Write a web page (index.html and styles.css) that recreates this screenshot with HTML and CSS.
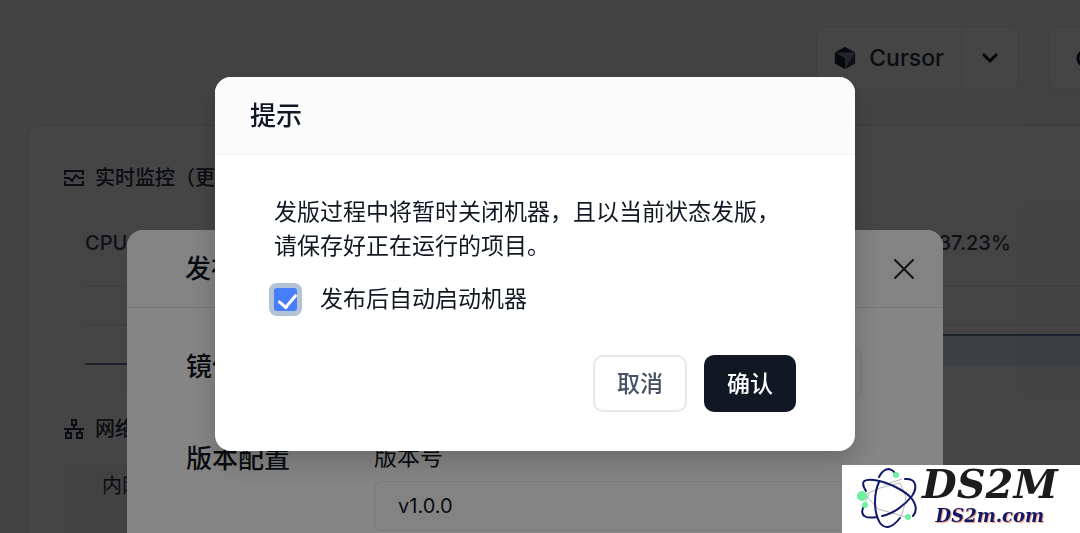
FILE: index.html
```html
<!DOCTYPE html>
<html lang="zh-CN">
<head>
  <meta charset="UTF-8">
  <meta name="viewport" content="width=device-width, initial-scale=1.0">
  <title>发版</title>
  <link rel="stylesheet" href="styles.css">
</head>
<body>
  <div class="page">
    <header class="toolbar">
      <div class="split-button">
        <button type="button" class="ide-button">
          <svg width="22" height="24" viewBox="0 0 24 26">
            <path d="M12 1 L23 7 V19 L12 25 L1 19 V7 Z" fill="#475569"/>
            <path d="M12 1 L23 7 H1 Z" fill="#18212f"/>
            <path d="M1 7 L12 13 V25 L1 19 Z" fill="#18212f"/>
            <path d="M1 7 H23 L12 25 V13 Z" fill="#7c8aa0"/>
            <path d="M23 7 V19 L12 25 Z" fill="#364152"/>
          </svg>
          Cursor
        </button>
        <button type="button" class="arrow-button" aria-label="更多">
          <svg width="18" height="12" viewBox="0 0 18 12" fill="none" stroke="#111824" stroke-width="3"><path d="M2 2 L9 9 L16 2"/></svg>
        </button>
      </div>
      <button type="button" class="next-button" aria-label="关机">
        <svg width="20" height="20" viewBox="0 0 20 20" fill="none" stroke="#18212f" stroke-width="3"><path d="M5 4 A8 8 0 1 0 15 4 M10 1 V9"/></svg>
      </button>
    </header>

    <main class="card">
      <h2 class="card-title">
        <svg width="20" height="18" viewBox="0 0 20 18" fill="none" stroke="#27303f" stroke-width="2">
          <path d="M1 6 V2 H19 V6 M1 12 V16 H19 V12 M0 9 H5 L8 12 L12 6 L15 9 H20"/>
        </svg>
        实时监控（更新时间）
      </h2>
      <div class="charts">
        <section class="chart">
          <p>CPU: 0.5%</p>
          <svg class="plot" viewBox="0 0 100 100" preserveAspectRatio="none">
            <path class="grid-line" d="M0 14 H100 M0 53 H100"/>
            <path class="usage" d="M0 92 H100"/>
          </svg>
        </section>
        <section class="chart">
          <p>内存: 37.23%</p>
          <svg class="plot" viewBox="0 0 100 100" preserveAspectRatio="none">
            <rect y="63" width="100" height="30" fill="#dbe7f0"/>
            <path class="grid-line" d="M0 14 H100 M0 53 H100 M0 93 H100"/>
            <path class="usage" d="M0 63 H100"/>
          </svg>
        </section>
      </div>
      <h2 class="card-title">
        <svg width="20" height="20" viewBox="0 0 20 20" fill="none" stroke="#27303f" stroke-width="2">
          <path d="M8 1 H12 V6 H8 Z M2 14 H7 V19 H2 Z M13 14 H18 V19 H13 Z M10 6 V10 M0 10 H20 M4 10 V14 M16 10 V14"/>
        </svg>
        网络
      </h2>
      <div class="network">内网地址</div>
    </main>
  </div>

  <div class="overlay release-overlay">
    <section class="modal release">
      <header class="modal-header">
        <h2>发布</h2>
        <button type="button" class="close" aria-label="关闭">
          <svg width="22" height="22" viewBox="0 0 22 22" stroke="#24282c" stroke-width="2" stroke-linecap="round"><path d="M2 2 L20 20 M20 2 L2 20"/></svg>
        </button>
      </header>
      <form class="release-form">
        <div class="row">
          <label class="row-label" for="image">镜像名</label>
          <input class="text-input" type="text" id="image">
        </div>
        <div class="row">
          <span class="row-label">版本配置</span>
          <div class="field">
            <label for="version">版本号</label>
            <input class="text-input" type="text" id="version" value="v1.0.0">
          </div>
        </div>
      </form>
    </section>
  </div>

  <div class="overlay confirm-overlay">
    <section class="modal confirm" role="dialog" aria-labelledby="confirm-title">
      <header class="modal-header">
        <h2 id="confirm-title">提示</h2>
      </header>
      <div class="confirm-body">
        <p>发版过程中将暂时关闭机器，且以当前状态发版，<br>请保存好正在运行的项目。</p>
        <label class="check">
          <input type="checkbox" checked>
          发布后自动启动机器
        </label>
      </div>
      <footer class="confirm-footer">
        <button type="button" class="cancel">取消</button>
        <button type="button" class="submit">确认</button>
      </footer>
    </section>
  </div>

  <aside class="brand">
    <svg width="62" height="64" viewBox="0 0 62 64" fill="none">
      <path d="M6 29 L24 21 L44 16 L50 30 Q48 44 44 51 M13 27 L7 40 M9 27 L22 42 L50 50 M28 18 L46 12" stroke="#b5b5ba"/>
      <g stroke="#111968" stroke-width="2" stroke-linecap="round">
        <path d="M23 10 Q27 2 33 2 Q37 3 39 6"/>
        <path d="M23 15 C18 26 17 44 24 56 Q32 66 44 51"/>
        <path d="M10 24 C3 13 10 12 18 13 C32 15 50 24 56 32 Q63 42 57 49"/>
        <path d="M49 12 C60 11 62 20 56 29 C49 38 37 47 26 49"/>
        <path d="M7 41 C4 49 10 52 21 50"/>
      </g>
      <g fill="#6df0a0">
        <circle cx="6" cy="29" r="5"/>
        <circle cx="9" cy="38" r="3"/>
        <circle cx="40" cy="8" r="3"/>
        <circle cx="52" cy="50" r="3"/>
      </g>
    </svg>
    <div class="brand-text">
      <strong>DS2M</strong>
      <span>DS2m.com</span>
    </div>
  </aside>
</body>
</html>
```
FILE: styles.css
```css
* {
  box-sizing: border-box;
}

body {
  margin: 0;
  height: 100vh;
  overflow: hidden;
  font-family: Inter, "Noto Sans CJK SC", sans-serif;
  background-color: #f4f4f5;
  color: #111824;
}

h2,
p {
  margin: 0;
}

button,
input {
  font-family: inherit;
}

button {
  cursor: pointer;
}

/* page */
.page {
  height: 100vh;
  padding-left: 27px;
  overflow: hidden;
}

.toolbar {
  display: flex;
  justify-content: flex-end;
  gap: 30px;
  padding-top: 26px;
  margin-right: -60px;
}

.split-button,
.next-button {
  height: 64px;
  border: 1px solid #e4e4e9;
  border-radius: 10px;
  background-color: #fafafa;
}

.split-button {
  display: flex;
}

.ide-button,
.arrow-button {
  display: flex;
  align-items: center;
  border: none;
  background: none;
  color: #27303f;
}

.ide-button {
  gap: 13px;
  padding: 0 17px;
  font-size: 23px;
  font-weight: 500;
}

.arrow-button {
  padding: 0 19px;
  border-left: 1px solid #e8e8ec;
}

.next-button {
  width: 91px;
  padding: 0 26px;
  text-align: left;
}

.next-button svg {
  display: block;
}

.card {
  margin-top: 35px;
  padding: 35px 0 40px 36px;
  border: 1px solid #e0e0e5;
  border-right: none;
  border-radius: 12px 0 0 12px;
  background-color: #fafafa;
}

.card-title {
  display: flex;
  align-items: center;
  gap: 11px;
  font-size: 20px;
  line-height: 34px;
  font-weight: 500;
  color: #27303f;
}

.charts {
  display: grid;
  grid-template-columns: 15fr 4fr;
  margin: 10px 0 17px;
}

.chart {
  height: 190px;
  padding: 21px 0 0 21px;
  background-color: #f6f6f7;
  font-size: 20px;
  line-height: 34px;
  font-weight: 500;
  color: #364152;
}

.plot {
  display: block;
  width: 100%;
  height: 100px;
  margin-top: 12px;
}

.grid-line {
  stroke: #dedee2;
}

.usage {
  stroke: #65779a;
  stroke-width: 2;
}

.network {
  margin-top: 18px;
  padding: 5px 38px;
  height: 90px;
  background-color: #f1f1f3;
  font-size: 20px;
  line-height: 34px;
  color: #27303f;
}

/* modals */
.overlay {
  position: fixed;
  inset: 0;
  display: flex;
  justify-content: center;
  align-items: flex-start;
  padding-right: 10px;
  overflow: hidden;
  background-color: rgba(0, 0, 0, 0.48);
}

.release-overlay {
  padding-top: 230px;
}

.confirm-overlay {
  padding-top: 77px;
}

.modal {
  border-radius: 16px;
  background-color: #fff;
  overflow: hidden;
}

.modal-header {
  display: flex;
  justify-content: space-between;
  align-items: center;
  height: 78px;
  border-bottom: 1px solid #f4f4f7;
  background-color: #fbfbfc;
}

.modal-header h2 {
  font-size: 26px;
  line-height: 38px;
  font-weight: 500;
}

.release {
  width: 816px;
  max-width: 100%;
}

.release .modal-header {
  padding: 0 28px 0 58px;
  border-color: #e4e4e8;
}

.close {
  display: flex;
  padding: 0;
  border: none;
  background: none;
}

.release-form {
  display: flex;
  flex-direction: column;
  gap: 42px;
  padding: 41px 81px 50px 59px;
}

.row {
  display: flex;
  align-items: flex-start;
}

.row-label {
  flex: 0 0 188px;
  font-size: 26px;
  line-height: 36px;
  font-weight: 500;
}

.field {
  display: flex;
  flex: 1;
  flex-direction: column;
  gap: 8px;
  font-size: 23px;
  line-height: 32px;
}

.text-input {
  flex: 1;
  width: 100%;
  min-height: 50px;
  padding: 0 23px;
  border: 1px solid #e8e8ec;
  border-radius: 8px;
  background-color: #fbfbfc;
  color: #111824;
  font-size: 20px;
}

.confirm {
  width: 640px;
  max-width: 100%;
  box-shadow: 0 10px 24px rgba(0, 0, 0, 0.2);
}

.confirm .modal-header {
  padding: 0 35px;
}

.confirm-body {
  padding: 40px 59px 0;
  font-size: 23px;
  line-height: 34px;
}

.check {
  display: flex;
  align-items: center;
  gap: 23px;
  margin-top: 19px;
}

.check input {
  appearance: none;
  width: 23px;
  height: 23px;
  margin: 0;
  border-radius: 3px;
  box-shadow: 0 0 0 5px #b3c3d6;
  background-color: #467efc;
}

/* tick */
.check input::before {
  content: "";
  display: block;
  width: 8px;
  height: 15px;
  margin: 2px 0 0 8px;
  border: solid #fff;
  border-width: 0 3px 3px 0;
  transform: rotate(40deg);
}

.confirm-footer {
  display: flex;
  justify-content: flex-end;
  gap: 17px;
  padding: 39px 59px;
}

.confirm-footer button {
  height: 57px;
  padding: 0 23px 4px;
  border-radius: 10px;
  font-size: 23px;
  font-weight: 500;
}

.confirm-footer .cancel {
  padding: 0 22px 4px;
  border: 2px solid #e8e8eb;
  background-color: #fff;
  color: #485264;
}

.submit {
  border: none;
  background-color: #111824;
  color: #fff;
}

/* site mark */
.brand {
  position: fixed;
  right: 0;
  bottom: 0;
  display: flex;
  gap: 4px;
  width: 238px;
  height: 68px;
  padding: 2px 0 0 14px;
  background-color: #fff;
}

.brand-text {
  display: flex;
  flex-direction: column;
  align-items: center;
  font-family: "DejaVu Serif", serif;
  font-style: italic;
  font-weight: bold;
}

.brand-text strong {
  font-size: 40px;
  line-height: 34px;
  color: #1c1c1c;
}

.brand-text span {
  font-size: 18px;
  line-height: 30px;
  color: #111968;
  text-shadow: 1px 1px 1px #f3a07c;
}
```
